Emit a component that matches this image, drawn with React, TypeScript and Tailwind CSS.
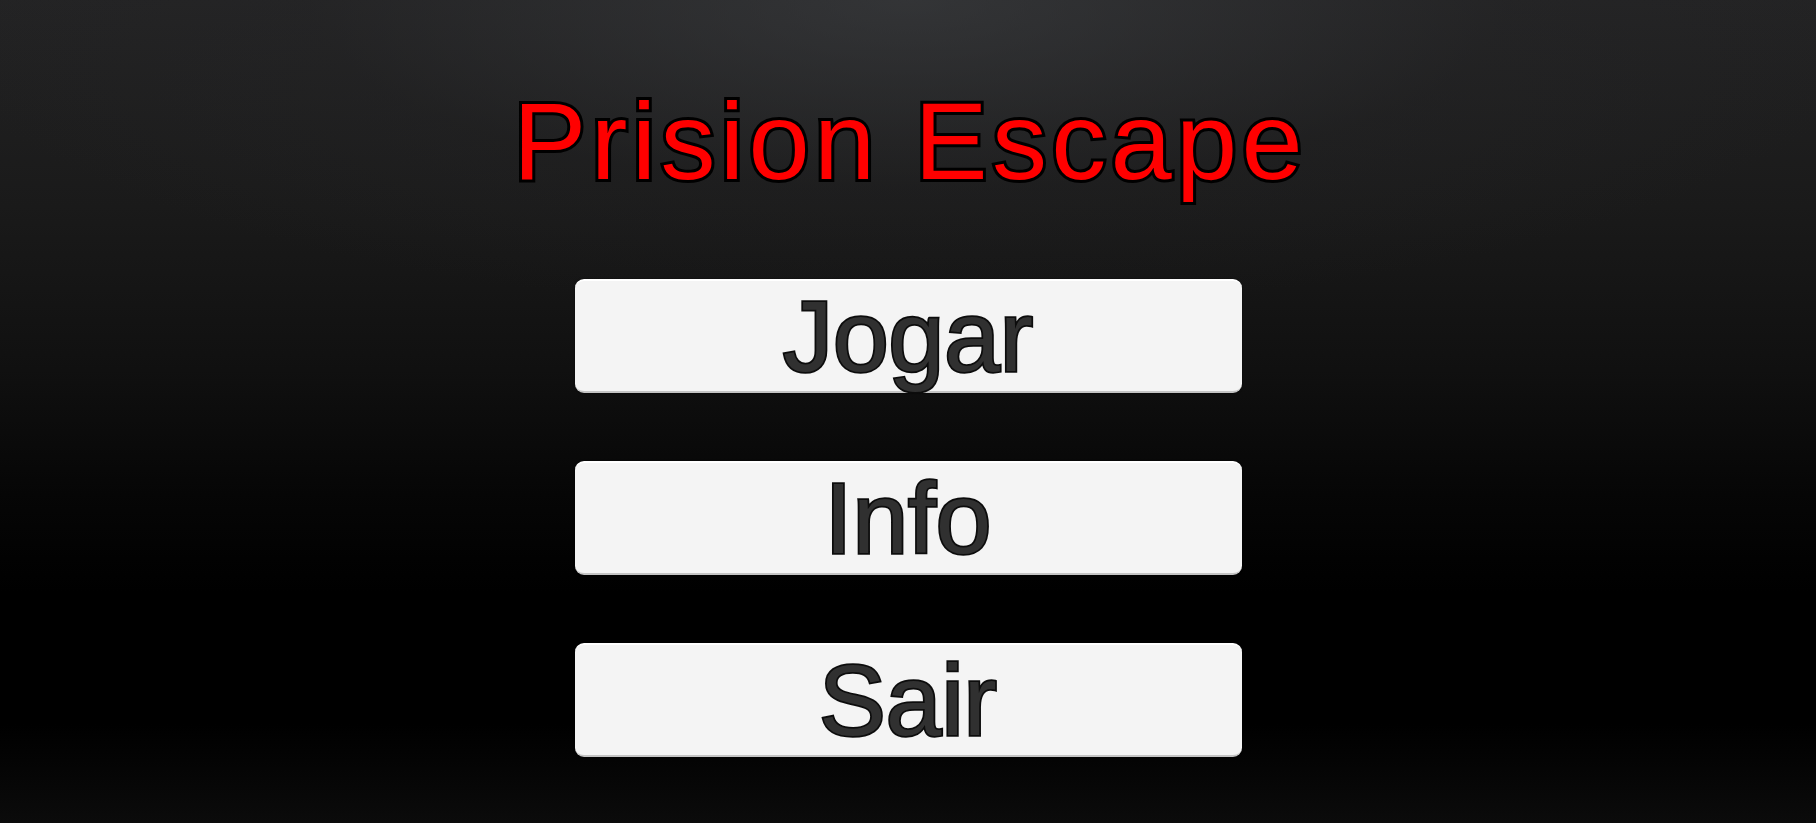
import React from "react";

const labels = ["Jogar", "Info", "Sair"];

export default function App() {
  return (
    <div className="w-[1816px] h-[823px] overflow-hidden flex flex-col items-center bg-[radial-gradient(ellipse_55%_38%_at_50%_0%,rgba(62,64,67,0.6)_0%,rgba(40,40,42,0.25)_60%,rgba(0,0,0,0)_100%),linear-gradient(180deg,#232324_0%,#1a1a1a_25%,#101010_45%,#060606_60%,#000000_72%,#000000_88%,#0b0b0b_100%)] font-['Liberation_Sans',Arial,sans-serif]">
      <h1 className="mt-[86px] h-[110px] text-[110px] leading-none text-[#ff0000] tracking-[4.3px] pl-[4px] [-webkit-text-stroke:6px_#000] [paint-order:stroke_fill] whitespace-nowrap">
        Prision Escape
      </h1>
      <div className="mt-[83px] flex flex-col gap-[68px]">
        {labels.map((l) => (
          <button
            key={l}
            className="w-[667px] h-[114px] rounded-[9px] bg-[#f4f4f4] border-t-2 border-t-white border-b-2 border-b-[#c4c4c4] shadow-[0_0_2px_rgba(0,0,0,0.6)] flex items-center justify-center"
          >
            <span className="text-[100px] leading-[114px] text-[#303030] [-webkit-text-stroke:3.5px_#0c0c0c] [paint-order:stroke_fill] whitespace-nowrap">
              {l}
            </span>
          </button>
        ))}
      </div>
    </div>
  );
}
